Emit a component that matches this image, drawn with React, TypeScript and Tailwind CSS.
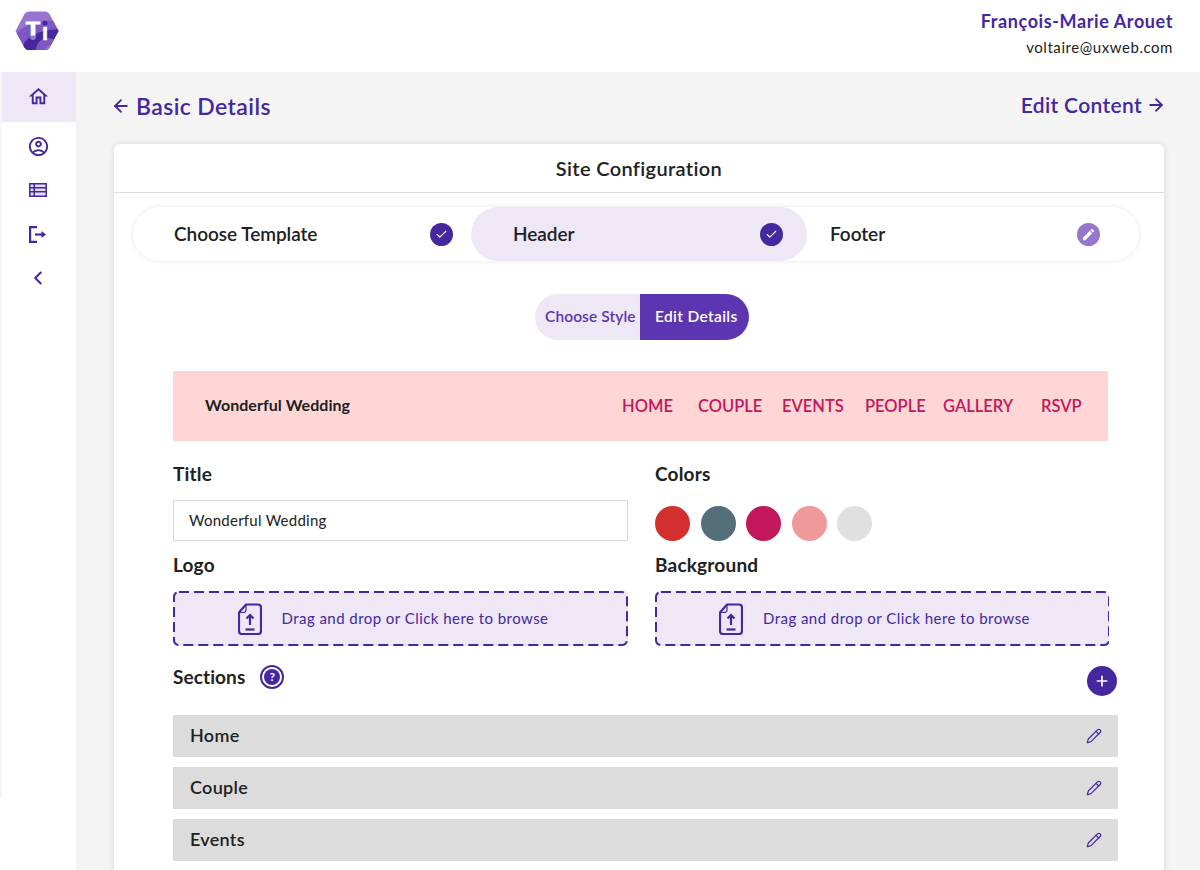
import { ArrowLeft, ArrowRight, Check, ChevronLeft, Pencil, Plus } from "lucide-react";
import { MdEdit, MdOutlineAccountCircle, MdOutlineHome } from "react-icons/md";

const navLinks = [
  { label: "HOME", width: "w-[76px]" },
  { label: "COUPLE", width: "w-[84px]" },
  { label: "EVENTS", width: "w-[83px]" },
  { label: "PEOPLE", width: "w-[78px]" },
  { label: "GALLERY", width: "w-[98px]" },
  { label: "RSVP", width: "w-[40px]" },
];

const swatches = ["bg-[#d32f2f]", "bg-[#546e7a]", "bg-[#c2185b]", "bg-[#ef9a9a]", "bg-[#e0e0e0]"];

function Logo() {
  return (
    <svg width="44" height="40" viewBox="0 0 44 40">
      <defs>
        <clipPath id="hex">
          <path d="M0.500 20 9.500 3Q11 0.500 13.500 0.500H30.500Q33 0.500 34.500 3L43.500 20 34.500 36.500Q33 39 30.500 39H13.500Q11 39 9.500 36.500Z" />
        </clipPath>
      </defs>
      <g clipPath="url(#hex)">
        <rect width="44" height="40" fill="#9575cd" />
        <path d="M0 24Q14 8 44 10V40H0Z" fill="#7e57c2" />
        <path d="M6 40Q10 20 44 18V40Z" fill="#4527a0" />
        <circle cx="33" cy="39" r="12" fill="#7e57c2" />
        <circle cx="37" cy="41" r="7" fill="#9575cd" />
        <circle cx="30" cy="12" r="2.500" fill="#4527a0" />
        <circle cx="18" cy="26" r="3" fill="#9575cd" />
      </g>
      <text x="11" y="24" fontFamily="Liberation Sans, sans-serif" fontWeight="700" fontSize="18" textLength="14" lengthAdjust="spacingAndGlyphs" fill="#fff" stroke="#fff" strokeWidth="1">
        T
      </text>
      <text x="27" y="29" fontFamily="Liberation Sans, sans-serif" fontWeight="700" fontSize="18" textLength="6" lengthAdjust="spacingAndGlyphs" fill="#fff" stroke="#fff" strokeWidth="0.500">
        I
      </text>
    </svg>
  );
}

function TableIcon() {
  return (
    <svg width="18" height="14" viewBox="0 0 18 14">
      <rect width="18" height="14" fill="#4527a0" />
      <path d="M1.500 1.500H4.500V4H1.500ZM6 1.500H16.500V4H6ZM1.500 5.500H4.500V8H1.500ZM6 5.500H16.500V8H6ZM1.500 9.500H4.500V12.500H1.500ZM6 9.500H16.500V12.500H6Z" fill="#e4dcf2" />
    </svg>
  );
}

function LogoutIcon() {
  return (
    <svg width="18" height="17" viewBox="0 0 18 17" fill="none" stroke="#4527a0" strokeWidth="2.200">
      <path d="M8 1.100H1.100V15.900H8" />
      <path d="M6 8.500H13" />
      <path d="M12.500 5 17 8.500 12.500 12Z" fill="#4527a0" stroke="none" />
    </svg>
  );
}

function UploadFileIcon() {
  return (
    <svg width="24" height="32" viewBox="0 0 24 32" fill="none" stroke="#4527a0" strokeWidth="2.200">
      <path d="M8 1.500H20Q23 1.500 23 4.500V28Q23 31 20 31H4Q1 31 1 28V9.500Z" strokeLinejoin="round" />
      <path d="M8 1.500V7Q8 9.500 5 9.500H1" strokeWidth="1.200" />
      <path d="M12 22V12M8.500 15.500 12 12 15.500 15.500" />
      <path d="M7.500 26.500H16.500" />
    </svg>
  );
}

function Dropzone() {
  return (
    <div className="relative flex h-[55px] items-center justify-center gap-[20px] rounded-[5px] bg-[#ede7f6] pr-[15px] text-[#4527a0]">
      <svg className="absolute inset-0 h-full w-full" fill="none">
        <rect x="1" y="1" width="453" height="53" rx="5" stroke="#4527a0" strokeWidth="2" strokeDasharray="10 5" />
      </svg>
      <UploadFileIcon />
      <span className="text-[15px] tracking-[0.45px]">Drag and drop or Click here to browse</span>
    </div>
  );
}

function Row({ label }: { label: string }) {
  return (
    <div className="flex h-[42px] shrink-0 items-center justify-between bg-[#dcdcdc] pb-[1px] pl-[17px] pr-[16px]">
      <span className="text-[18px] font-semibold tracking-[0.3px] text-[#212121]">{label}</span>
      <Pencil className="h-[16px] w-[16px] text-[#4527a0]" strokeWidth={1.8} />
    </div>
  );
}

function StepCheck() {
  return (
    <span className="flex h-[23px] w-[23px] items-center justify-center rounded-full bg-[#4527a0]">
      <Check className="h-[13px] w-[13px] text-white" strokeWidth={2} />
    </span>
  );
}

export default function App() {
  return (
    <div className="flex h-[870px] w-[1200px] flex-col overflow-hidden bg-white font-['Lato',sans-serif] text-[#212121]">
      <header className="flex h-[72px] shrink-0 items-start justify-between pl-[15px] pr-[27px]">
        <div className="pt-[11px]">
          <Logo />
        </div>
        <div className="flex flex-col items-end pt-[9px]">
          <span className="text-[18px] font-bold leading-[24px] tracking-[0.6px] text-[#4527a0]">François-Marie Arouet</span>
          <span className="mt-[4px] text-[15px] leading-[20px] tracking-[0.55px]">voltaire@uxweb.com</span>
        </div>
      </header>

      <div className="flex min-h-0 flex-1">
        <aside className="h-[726px] w-[76px] shrink-0 border-l-2 border-[#f6f6f6] text-[#4527a0]">
          <div className="flex h-[50px] items-center justify-center bg-[#ede7f6] pb-[1px] pr-[2px]">
            <MdOutlineHome size={23} />
          </div>
          <div className="flex flex-col items-center pr-[2px] pt-[13px]">
            <div className="flex h-[22px] items-center">
              <MdOutlineAccountCircle size={23} />
            </div>
            <div className="mt-[22px] flex h-[22px] items-center">
              <TableIcon />
            </div>
            <div className="mt-[22px] flex h-[22px] items-center">
              <LogoutIcon />
            </div>
            <div className="mt-[22px] flex h-[22px] items-center">
              <ChevronLeft size={22} strokeWidth={2.2} />
            </div>
          </div>
        </aside>

        <main className="min-w-0 flex-1 bg-[#f4f4f4] pl-[37px] pr-[36px]">
          <div className="flex h-[72px] items-start justify-between pt-[19px] text-[#4527a0]">
            <div className="-ml-[2px] flex items-center gap-[5px]">
              <ArrowLeft size={20} strokeWidth={2.2} />
              <span className="text-[23px] font-semibold leading-[30px] tracking-[0.4px]">Basic Details</span>
            </div>
            <div className="-mr-[2px] -mt-[1px] flex items-center gap-[4px]">
              <span className="text-[21px] font-semibold leading-[30px] tracking-[0.35px]">Edit Content</span>
              <ArrowRight size={20} strokeWidth={2.2} />
            </div>
          </div>

          <section className="ml-[1px] h-[800px] rounded-t-[6px] bg-white shadow-[0_0_6px_rgba(0,0,0,0.12)]">
            <h1 className="flex h-[49px] items-center justify-center border-b border-[#dddddd] text-[20px] font-semibold tracking-[0.35px]">
              Site Configuration
            </h1>

            <div className="ml-[19px] mr-[25px] mt-[14px] flex h-[54px] rounded-full bg-white text-[19px] font-semibold tracking-[-0.05px] shadow-[0_0_5px_rgba(0,0,0,0.1)]">
              <div className="flex w-[338px] items-center justify-between pl-[41px] pr-[18px]">
                <span>Choose Template</span>
                <StepCheck />
              </div>
              <div className="flex w-[336px] items-center justify-between rounded-full bg-[#ede7f6] pl-[42px] pr-[24px]">
                <span>Header</span>
                <StepCheck />
              </div>
              <div className="flex flex-1 items-center justify-between pl-[23px] pr-[39px]">
                <span>Footer</span>
                <span className="flex h-[23px] w-[23px] items-center justify-center rounded-full bg-[#9575cd]">
                  <MdEdit className="text-white" size={15} />
                </span>
              </div>
            </div>

            <div className="mt-[33px] flex justify-center pl-[6px] text-[15.500px] font-semibold">
              <span className="flex h-[46px] w-[105px] items-center whitespace-nowrap rounded-l-full bg-[#ede7f6] pl-[10px] tracking-[0.1px] text-[#5e35b1]">Choose Style</span>
              <span className="flex h-[46px] w-[109px] items-center whitespace-nowrap rounded-r-full bg-[#5e35b1] pl-[15px] tracking-[0.35px] text-white">Edit Details</span>
            </div>

            <div className="ml-[59px] mr-[46px] mt-[31px]">
              <div className="flex h-[70px] w-[935px] items-center justify-between bg-[#ffd6d6] pl-[32px] pr-[27px]">
                <span className="pb-[2px] text-[16px] font-bold tracking-[0.05px]">Wonderful Wedding</span>
                <nav className="flex text-[16.500px] font-semibold text-[#c2185b]">
                  {navLinks.map((link) => (
                    <span key={link.label} className={link.width}>
                      {link.label}
                    </span>
                  ))}
                </nav>
              </div>

              <div className="mt-[21px] grid w-[936px] grid-cols-[455px_454px] gap-x-[27px]">
                <div>
                  <h2 className="text-[19px] font-bold leading-[24px] tracking-[0.2px]">Title</h2>
                  <input
                    readOnly
                    value="Wonderful Wedding"
                    className="mt-[14px] h-[41px] w-full border border-[#d9d9d9] bg-white px-[15px] pb-[2px] text-[15px] tracking-[0.25px] text-[#212121] outline-none"
                  />
                </div>
                <div>
                  <h2 className="text-[19px] font-bold leading-[24px] tracking-[0.2px]">Colors</h2>
                  <div className="mt-[20px] flex gap-[10.500px]">
                    {swatches.map((swatch) => (
                      <span key={swatch} className={`h-[35px] w-[35px] rounded-full ${swatch}`} />
                    ))}
                  </div>
                </div>
                <div className="mt-[12px]">
                  <h2 className="text-[19px] font-bold leading-[24px] tracking-[0.2px]">Logo</h2>
                  <div className="mt-[14px]">
                    <Dropzone />
                  </div>
                </div>
                <div className="mt-[12px]">
                  <h2 className="text-[19px] font-bold leading-[24px] tracking-[0.2px]">Background</h2>
                  <div className="mt-[14px]">
                    <Dropzone />
                  </div>
                </div>
              </div>

              <div className="mt-[19px] flex h-[42px] w-[945px] items-start justify-between pr-[1px]">
                <div className="flex items-center gap-[15px]">
                  <h2 className="text-[19px] font-bold leading-[24px] tracking-[0.1px]">Sections</h2>
                  <span className="flex h-[24px] w-[24px] items-center justify-center rounded-full border-2 border-[#4527a0]">
                    <span className="flex h-[16px] w-[16px] items-center justify-center rounded-full bg-[#4527a0] text-[12px] font-bold leading-none text-white">?</span>
                  </span>
                </div>
                <span className="mt-[1px] flex h-[30px] w-[30px] items-center justify-center rounded-full bg-[#4527a0]">
                  <Plus className="h-[16px] w-[16px] text-white" strokeWidth={2.5} />
                </span>
              </div>

              <div className="mt-[8px] flex w-[945px] flex-col gap-[10px]">
                <Row label="Home" />
                <Row label="Couple" />
                <Row label="Events" />
              </div>
            </div>
          </section>
        </main>
      </div>
    </div>
  );
}
